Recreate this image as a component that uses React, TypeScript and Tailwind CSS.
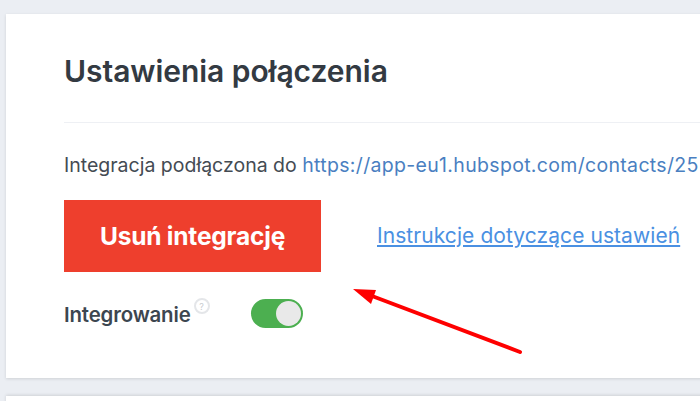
export default function App() {
  return (
    <div className="relative h-[401px] w-[700px] overflow-hidden bg-[#ebeef3] font-['Inter','Liberation_Sans',sans-serif]">
      <div className="flex flex-col gap-[18px] pl-[6px] pt-[14px]">
        <div className="h-[364px] w-[760px] bg-white pl-[58px] pt-[39px] shadow-[0_1px_3px_rgba(0,0,0,0.12)]">
          <h1 className="h-[36px] whitespace-nowrap text-[30px] font-semibold leading-[36px] tracking-[-0.05px] text-[#333a42]">Ustawienia połączenia</h1>
          <div className="mt-[33px] h-px bg-[#eef0f4]" />
          <p className="mt-[30px] whitespace-nowrap text-[19.5px] leading-[24px] text-[#444b53]">
            Integracja podłączona do <span className="tracking-[0.32px] text-[#4a7fc1]">https://app-eu1.hubspot.com/contacts/25</span>
          </p>
          <div className="mt-[23px] flex items-center">
            <button className="h-[72px] w-[257px] whitespace-nowrap bg-[#ee3f2d] text-[24.5px] font-bold tracking-[-0.2px] text-white">Usuń integrację</button>
            <a className="ml-[56px] whitespace-nowrap text-[21px] tracking-[0.07px] text-[#4a90e2] underline">Instrukcje dotyczące ustawień</a>
          </div>
          <div className="mt-[26px] flex items-center">
            <span className="pt-[1px] text-[20.4px] font-semibold leading-[29px] tracking-[-0.15px] text-[#3c4650]">Integrowanie</span>
            <span className="mb-[15px] ml-[3px] flex h-[16px] w-[16px] items-center justify-center rounded-full border-2 border-[#e4e6e9] text-[9px] leading-none text-[#c8ccd0]">?</span>
            <div className="ml-[41px] flex h-[29px] w-[52px] items-center justify-end rounded-full bg-[#4caf50] pr-[2px]">
              <div className="h-[25px] w-[25px] rounded-full bg-[#e9e9e9]" />
            </div>
          </div>
        </div>
        <div className="h-[20px] w-[760px] bg-white shadow-[0_-1px_3px_rgba(0,0,0,0.12)]" />
      </div>
      <svg className="absolute left-0 top-0" width="700" height="401" viewBox="0 0 700 401">
        <line x1="520" y1="352" x2="372" y2="296" stroke="#fe0000" strokeWidth="4" strokeLinecap="round" />
        <polygon points="353,289 376,290 371,304" fill="#fe0000" />
      </svg>
    </div>
  );
}
